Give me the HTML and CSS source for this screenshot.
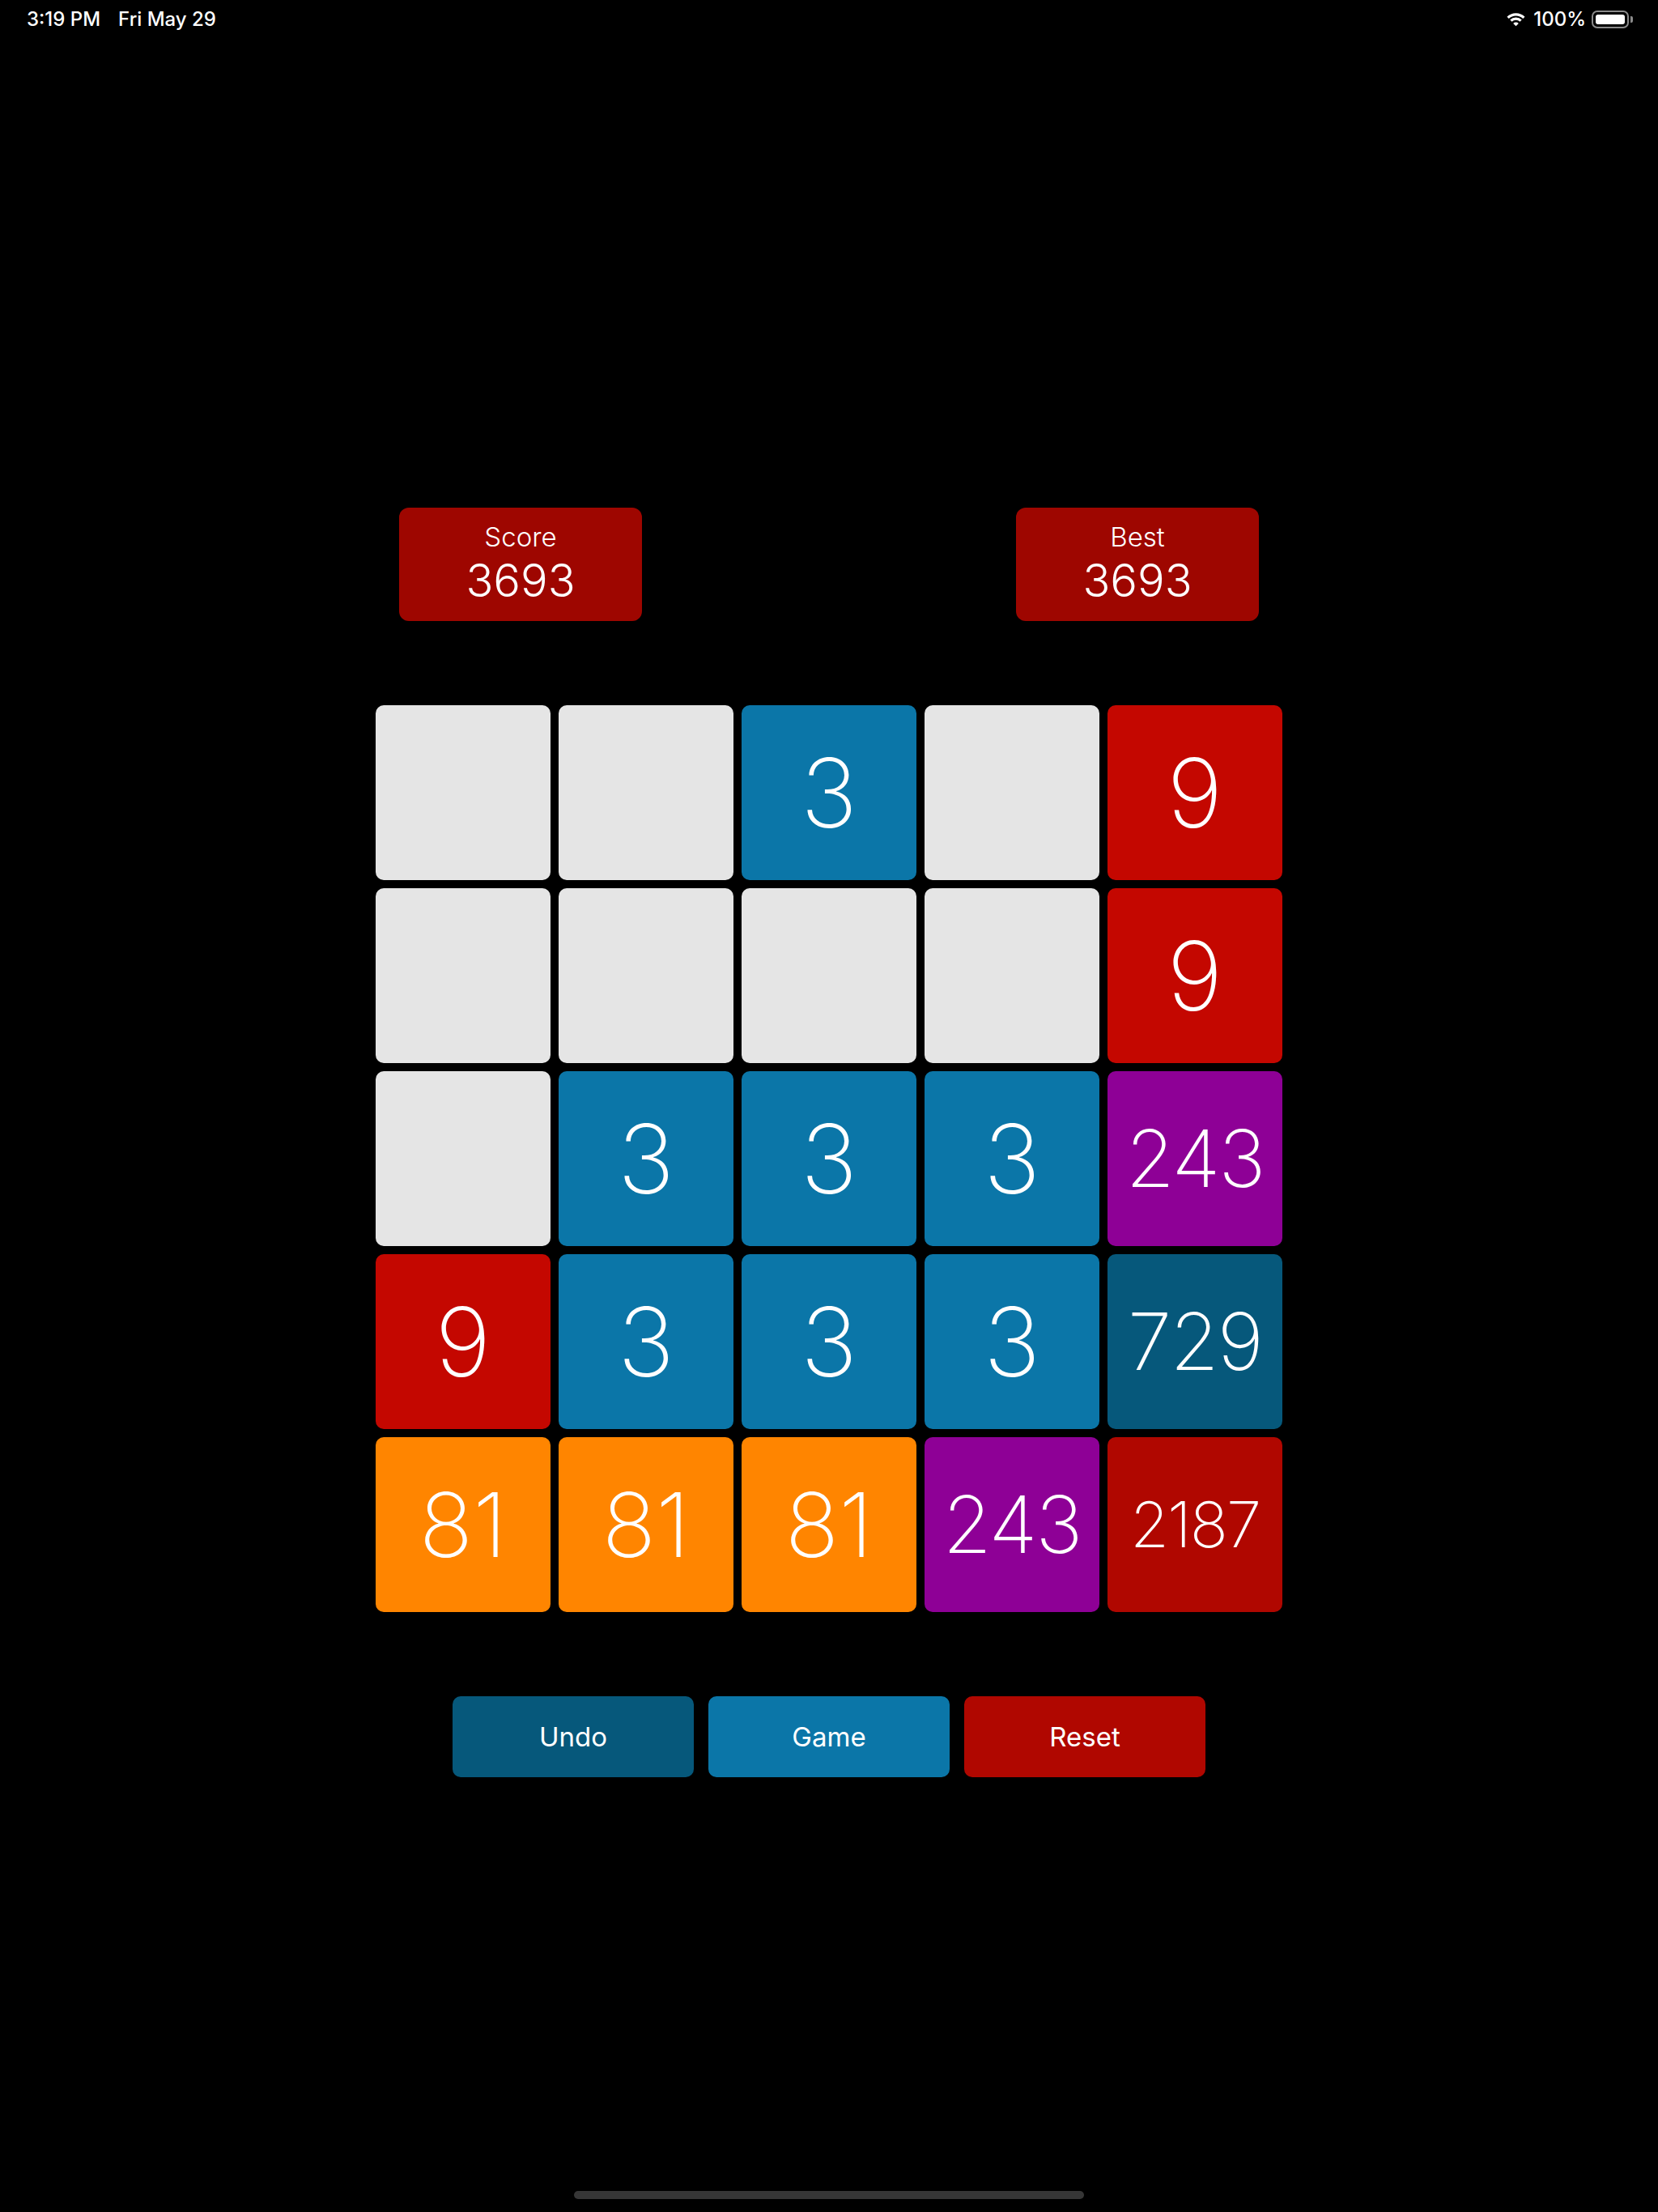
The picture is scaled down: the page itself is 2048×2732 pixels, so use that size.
FILE: index.html
```html
<!DOCTYPE html>
<html lang="en">
<head>
<meta charset="utf-8">
<title>3s</title>
<link rel="stylesheet" href="styles.css">
</head>
<body>
<div class="screen">
  <header class="status">
    <div class="status-left">
      <span>3:19 PM</span>
      <span>Fri May 29</span>
    </div>
    <div class="status-right">
      <svg class="wifi" width="27" height="19" viewBox="0 0 27 19" aria-hidden="true">
        <path d="M3.6 7.9 A14 14 0 0 1 23.4 7.9" fill="none" stroke="#fff" stroke-width="3.2"/>
        <path d="M7.4 11.6 A8.6 8.6 0 0 1 19.6 11.6" fill="none" stroke="#fff" stroke-width="3.2"/>
        <path d="M13.5 18.2 L10.2 14.9 A4.7 4.7 0 0 1 16.8 14.9 Z" fill="#fff"/>
      </svg>
      <span class="pct">100%</span>
      <div class="battery"><div class="battery-fill"></div></div>
      <div class="battery-nub"></div>
    </div>
  </header>

  <main class="game">
    <div class="scores">
      <div class="score-box">
        <div class="score-label">Score</div>
        <div class="score-value">3693</div>
      </div>
      <div class="score-box">
        <div class="score-label">Best</div>
        <div class="score-value">3693</div>
      </div>
    </div>

    <div class="board">
      <div class="tile empty"></div>
      <div class="tile empty"></div>
      <div class="tile t3 d1">3</div>
      <div class="tile empty"></div>
      <div class="tile t9 d1">9</div>

      <div class="tile empty"></div>
      <div class="tile empty"></div>
      <div class="tile empty"></div>
      <div class="tile empty"></div>
      <div class="tile t9 d1">9</div>

      <div class="tile empty"></div>
      <div class="tile t3 d1">3</div>
      <div class="tile t3 d1">3</div>
      <div class="tile t3 d1">3</div>
      <div class="tile t243 d3">243</div>

      <div class="tile t9 d1">9</div>
      <div class="tile t3 d1">3</div>
      <div class="tile t3 d1">3</div>
      <div class="tile t3 d1">3</div>
      <div class="tile t729 d3">729</div>

      <div class="tile t81 d2">81</div>
      <div class="tile t81 d2">81</div>
      <div class="tile t81 d2">81</div>
      <div class="tile t243 d3">243</div>
      <div class="tile t2187 d4">2187</div>
    </div>

    <div class="actions">
      <button class="btn btn-undo">Undo</button>
      <button class="btn btn-game">Game</button>
      <button class="btn btn-reset">Reset</button>
    </div>
  </main>

  <div class="home-indicator"></div>
</div>
</body>
</html>
```

FILE: styles.css
```css
html, body {
  margin: 0;
  padding: 0;
  background: #000;
}

body {
  font-family: Inter, Roboto, "Liberation Sans", sans-serif;
  color: #fff;
}

.screen {
  position: relative;
  width: 2048px;
  height: 2732px;
  background: #000;
  overflow: hidden;
}

/* Status bar */
.status {
  height: 48px;
  padding: 0 31px 0 33px;
  display: flex;
  align-items: center;
  justify-content: space-between;
  font-size: 24px;
  font-weight: 500;
  line-height: 1;
}

.status-left {
  display: flex;
  gap: 22px;
}

.status-right {
  display: flex;
  align-items: center;
}

.wifi {
  display: block;
  margin-right: 8px;
  margin-top: -2px;
}

.pct {
  margin-right: 7px;
}

.battery {
  width: 46px;
  height: 22px;
  box-sizing: border-box;
  border: 2px solid #8a8a8a;
  border-radius: 7px;
  padding: 3px;
}

.battery-fill {
  width: 100%;
  height: 100%;
  background: #fff;
  border-radius: 3px;
}

.battery-nub {
  width: 3px;
  height: 8px;
  margin-left: 2px;
  background: #8a8a8a;
  border-radius: 0 2px 2px 0;
}

/* Game */
.game {
  display: flex;
  flex-direction: column;
  align-items: center;
}

.scores {
  margin-top: 579px;
  width: 1062px;
  display: flex;
  justify-content: space-between;
}

.score-box {
  width: 300px;
  height: 140px;
  box-sizing: border-box;
  padding-top: 16px;
  background: #9e0600;
  border-radius: 12px;
  display: flex;
  flex-direction: column;
  align-items: center;
}

.score-label {
  font-size: 33px;
  font-weight: 300;
  line-height: 40px;
}

.score-value {
  margin-top: 4px;
  font-size: 56px;
  font-weight: 300;
  line-height: 60px;
}

.board {
  margin-top: 104px;
  display: grid;
  grid-template-columns: repeat(5, 216px);
  grid-auto-rows: 216px;
  gap: 10px;
}

.tile {
  border-radius: 10px;
  display: flex;
  align-items: center;
  justify-content: center;
  font-weight: 200;
  line-height: 1;
  color: #fff;
}

.empty { background: #e5e5e5; }
.t3 { background: #0b76a8; }
.t9 { background: #c40700; }
.t81 { background: #ff8500; }
.t243 { background: #8e0096; }
.t729 { background: #06587b; }
.t2187 { background: #b00700; }

.d1 { font-size: 118px; }
.d2 { font-size: 110px; }
.d3 { font-size: 98px; letter-spacing: -2px; }
.d4 { font-size: 78px; letter-spacing: -2px; }

.actions {
  margin-top: 104px;
  display: flex;
  gap: 18px;
}

.btn {
  width: 298px;
  height: 100px;
  border: none;
  border-radius: 10px;
  color: #fff;
  font-family: Inter, Roboto, "Liberation Sans", sans-serif;
  font-size: 33px;
  font-weight: 400;
  padding: 0;
}

.btn-undo { background: #06587b; }
.btn-game { background: #0b76a8; }
.btn-reset { background: #b00700; }

.home-indicator {
  position: absolute;
  left: 709px;
  top: 2706px;
  width: 630px;
  height: 10px;
  border-radius: 5px;
  background: #363636;
}
```
